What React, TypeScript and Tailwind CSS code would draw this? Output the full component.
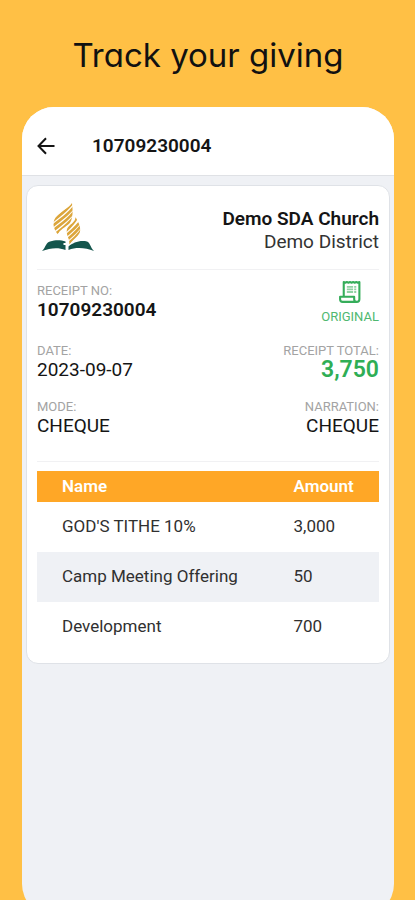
import type { ReactNode } from "react";

const entries = [
  { name: "GOD'S TITHE 10%", amount: "3,000" },
  { name: "Camp Meeting Offering", amount: "50" },
  { name: "Development", amount: "700" },
];

function BackIcon() {
  return (
    <svg viewBox="0 0 24 24" className="size-6" fill="none" stroke="#151515" strokeWidth="2" aria-hidden="true">
      <path d="M20.500 12H5M12 4.200 4.500 12l7.500 7.800" />
    </svg>
  );
}

function ChurchLogo() {
  return (
    <svg viewBox="0 0 54 50" className="h-[50px] w-[54px]" role="img" aria-label="Church logo">
      <defs>
        <clipPath id="flame-back">
          <path d="M31 0C28 5 20 8 16 13C12 17 11.500 22 14 27Q15.500 30 17 31.500C18 27 25 24 29 20C32 15 32 8 31 0Z" />
        </clipPath>
        <clipPath id="flame-front">
          <path d="M34.500 14C34.500 20 28 21 26 26C25 30 27 34 28 37L28.500 42C31 37 37 34 39 29C40 24 37.500 19 34.500 14Z" />
        </clipPath>
      </defs>
      <g fill="none" stroke="#dca63c" strokeWidth="2.7">
        <g clipPath="url(#flame-back)">
          <path d="M10 19.500C17 13 25 9 32 -1M10 24.500C17 18 25 14 33 4M10 29.500C17 23 25 19 33 9M11 34C17 28 25 24 33 14" />
        </g>
        <g clipPath="url(#flame-front)">
          <path d="M23 29.500C29 24 34 20 37 12M23 34.500C29 29 35 25 41 16.500M23 39.500C29 34 35 30 41 21.500M23 44C29 39 35 35 41 26.500" />
        </g>
      </g>
      <path
        fill="#14564d"
        d="M1 48C5 44 5 39 9 38.500C15 36.500 20 37 24.500 38.500V40H22.500V42H24.500V47C17 44 9 45 1 48Z"
      />
      <path fill="#14564d" d="M27.500 47V43.500C32 40 38 37 46 38.500C49 39 49 44 53 48C45 45 36 43.500 27.500 47Z" />
    </svg>
  );
}

function ReceiptIcon() {
  return (
    <svg viewBox="0 1 23 23" className="size-6" fill="none" stroke="#35ad5a" strokeWidth="2" strokeLinejoin="round" aria-hidden="true">
      <path d="M5.500 16V3l1.500.6L8.500 3l1.500.6 1.500-.6 1.500.6 1.500-.6 1.500.6 1.500-.6 1.500.6L20.500 3v16.500a2.500 2.500 0 0 1-2.500 2.500H4.500A2.500 2.500 0 0 1 2 19.500V17h13.500v2.500A2.500 2.500 0 0 0 18 22" />
      <path strokeWidth="1.700" opacity=".55" d="M8.500 7.500h6M8.500 10h6M8.500 12.500h6M15.500 7.500h2M15.500 10h2M15.500 12.500h2" />
    </svg>
  );
}

type FieldProps = { label: string; valueClass: string; children: ReactNode };

function Field({ label, valueClass, children }: FieldProps) {
  return (
    <div>
      <dt className="text-[13px] leading-4 text-[#a3a3a3]">{label}</dt>
      <dd className={valueClass}>{children}</dd>
    </div>
  );
}

export default function App() {
  return (
    <div className="flex h-screen flex-col overflow-hidden bg-[#ffc045] pr-[21px] pl-[22px] font-[Roboto,sans-serif] text-[#151515]">
      <h1 className="pt-[33px] text-center font-[Inter,sans-serif] text-[33px] leading-[44px] text-[#111] [font-feature-settings:'cv11']">
        Track your giving
      </h1>

      <main className="mt-[30px] -mb-4 flex flex-1 flex-col overflow-hidden rounded-[32px] bg-[#eff1f5]">
        <header className="flex h-[69px] shrink-0 items-center border-b border-[#dfe1e5] bg-white pt-[9px] pl-3">
          <button type="button" aria-label="Back">
            <BackIcon />
          </button>
          <h2 className="ml-[34px] text-[19px] leading-6 font-semibold">10709230004</h2>
        </header>

        <section className="mx-1 mt-[9px] rounded-xl border border-[#dfe2e7] bg-white px-[10px] pt-[11px] pb-[11px]">
          <div className="flex h-[73px] items-start justify-between border-b border-[#f1f1f3] pt-[6px]">
            <div className="pl-1">
              <ChurchLogo />
            </div>
            <div className="pt-1 text-right">
              <p className="text-[19px] leading-[23px] font-semibold">Demo SDA Church</p>
              <p className="text-[19px] leading-[23px] text-[#333]">Demo District</p>
            </div>
          </div>

          <dl className="flex flex-col gap-[18px] border-b border-[#f1f1f3] pt-[10px] pb-6">
            <div className="flex justify-between">
              <div className="pt-[3px]">
                <Field label="RECEIPT NO:" valueClass="text-[19px] leading-[22px] font-semibold">10709230004</Field>
              </div>
              <div className="flex flex-col items-center gap-[5px] text-[13px] leading-4 text-[#4fb870]">
                <ReceiptIcon />
                ORIGINAL
              </div>
            </div>
            <div className="flex justify-between">
              <Field label="DATE:" valueClass="text-[19px] leading-[22px]">2023-09-07</Field>
              <div className="text-right">
                <Field label="RECEIPT TOTAL:" valueClass="text-[23px] leading-[22px] font-semibold text-[#2fae55]">3,750</Field>
              </div>
            </div>
            <div className="flex justify-between">
              <Field label="MODE:" valueClass="text-[19px] leading-[22px]">CHEQUE</Field>
              <div className="text-right">
                <Field label="NARRATION:" valueClass="text-[19px] leading-[22px]">CHEQUE</Field>
              </div>
            </div>
          </dl>

          <table className="mt-[9px] w-full table-fixed text-left">
            <thead>
              <tr className="h-[31px] bg-[#ffa726] text-[17px] text-white">
                <th className="w-3/4 pl-[25px] font-semibold">Name</th>
                <th className="w-1/4 font-semibold">Amount</th>
              </tr>
            </thead>
            <tbody>
              {entries.map((entry) => (
                <tr key={entry.name} className="h-[50px] text-[17px] text-[#303030] even:bg-[#eff1f5]">
                  <td className="pl-[25px]">{entry.name}</td>
                  <td>{entry.amount}</td>
                </tr>
              ))}
            </tbody>
          </table>
        </section>
      </main>
    </div>
  );
}
